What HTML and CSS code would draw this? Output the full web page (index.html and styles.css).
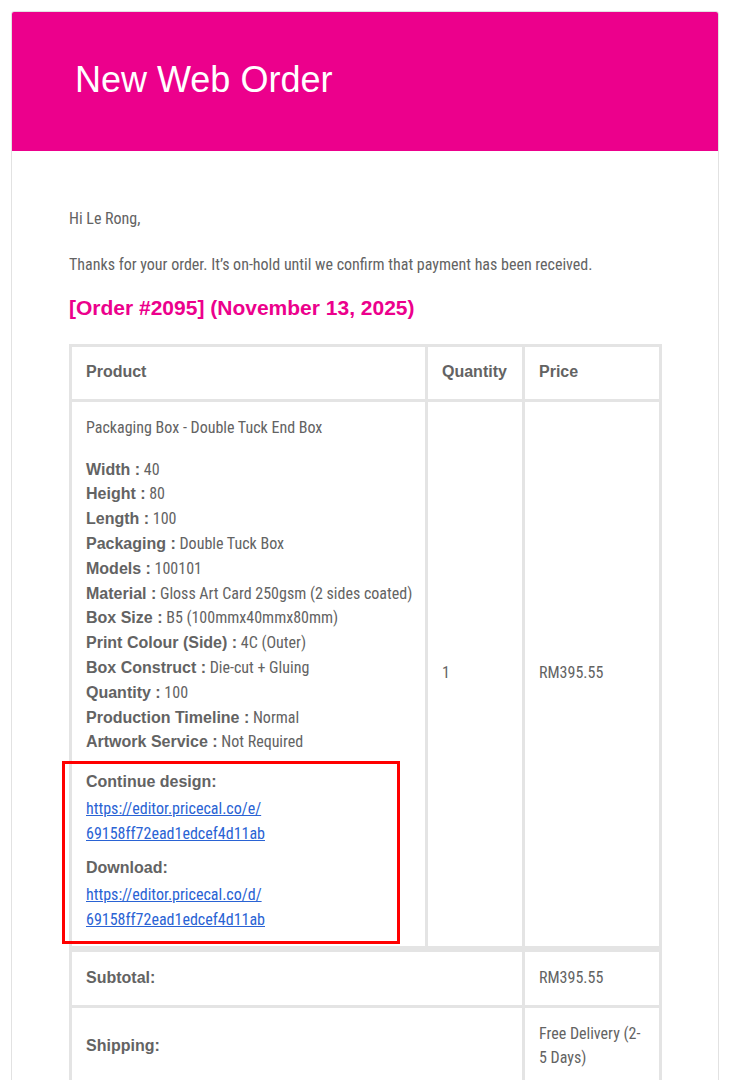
FILE: index.html
```html
<!DOCTYPE html>
<html lang="en">
<head>
<meta charset="utf-8">
<title>New Web Order</title>
<link rel="stylesheet" href="styles.css">
</head>
<body>
<div class="card">
  <div class="header">
    <h1 class="title">New Web Order</h1>
  </div>
  <div class="content">
    <p class="greet">Hi Le Rong,</p>
    <p class="intro">Thanks for your order. It’s on-hold until we confirm that payment has been received.</p>
    <h2 class="order-title">[Order #2095] (November 13, 2025)</h2>
    <table class="order">
      <colgroup>
        <col class="c-product">
        <col class="c-qty">
        <col class="c-price">
      </colgroup>
      <thead>
        <tr>
          <th>Product</th>
          <th>Quantity</th>
          <th>Price</th>
        </tr>
      </thead>
      <tbody>
        <tr>
          <td class="product">
            <div class="pname">Packaging Box - Double Tuck End Box</div>
            <ul class="meta">
              <li><b>Width :</b> 40</li>
              <li><b>Height :</b> 80</li>
              <li><b>Length :</b> 100</li>
              <li><b>Packaging :</b> Double Tuck Box</li>
              <li><b>Models :</b> 100101</li>
              <li><b>Material :</b> Gloss Art Card 250gsm (2 sides coated)</li>
              <li><b>Box Size :</b> B5 (100mmx40mmx80mm)</li>
              <li><b>Print Colour (Side) :</b> 4C (Outer)</li>
              <li><b>Box Construct :</b> Die-cut + Gluing</li>
              <li><b>Quantity :</b> 100</li>
              <li><b>Production Timeline :</b> Normal</li>
              <li><b>Artwork Service :</b> Not Required</li>
            </ul>
            <div class="links">
              <div class="highlight"></div>
              <div class="link-label">Continue design:</div>
              <a class="link" href="#">https://editor.pricecal.co/e/<br>69158ff72ead1edcef4d11ab</a>
              <div class="link-label second">Download:</div>
              <a class="link" href="#">https://editor.pricecal.co/d/<br>69158ff72ead1edcef4d11ab</a>
            </div>
          </td>
          <td class="num">1</td>
          <td class="num">RM395.55</td>
        </tr>
      </tbody>
      <tfoot>
        <tr class="first">
          <th colspan="2">Subtotal:</th>
          <td>RM395.55</td>
        </tr>
        <tr>
          <th colspan="2">Shipping:</th>
          <td>Free Delivery (2-<br>5 Days)</td>
        </tr>
      </tfoot>
    </table>
  </div>
</div>
</body>
</html>
```

FILE: styles.css
```css
html, body {
  margin: 0;
  padding: 0;
  background: #ffffff;
}

body {
  padding: 11px 16px 0 11px;
  font-family: "Roboto Condensed", "Liberation Sans", sans-serif;
  color: #636363;
}

.card {
  width: 706px;
  border: 1px solid #e2e2e2;
  border-radius: 3px;
  background: #fff;
  overflow: hidden;
}

.header {
  background: #ec008c;
  height: 139px;
  display: flex;
  align-items: center;
  padding: 0 0 0 63px;
}

.title {
  margin: 0 0 3px;
  font-family: "Liberation Sans", Arial, sans-serif;
  font-weight: 400;
  font-size: 36px;
  letter-spacing: 0;
  color: #ffffff;
}

.content {
  padding: 56px 58px 0 57px;
}

.greet,
.intro {
  margin: 0;
  font-size: 16px;
  line-height: 24px;
}

.intro {
  margin-top: 22px;
}

.order-title {
  margin: 17px 0 0;
  font-family: "Liberation Sans", Arial, sans-serif;
  font-weight: 700;
  font-size: 21px;
  line-height: 28px;
  color: #ec008c;
}

.order {
  margin-top: 22px;
  width: 590px;
  border-collapse: collapse;
  table-layout: fixed;
}

.c-product { width: 356px; }
.c-qty { width: 97px; }
.c-price { width: 137px; }

.order th,
.order td {
  border: 3px solid #e4e4e4;
  padding: 14px 14px;
  text-align: left;
  line-height: 24.8px;
  font-size: 16px;
  color: #636363;
}

.order th {
  font-family: "Liberation Sans", Arial, sans-serif;
  font-weight: 700;
}

.order thead th {
  padding-top: 13px;
  padding-bottom: 14px;
}

.order td.num {
  vertical-align: middle;
}

.order td.product {
  padding-top: 14px;
  padding-bottom: 14px;
  padding-right: 8px;
}

.pname {
  margin-bottom: 17px;
}

.meta {
  list-style: none;
  margin: 0;
  padding: 0;
  white-space: nowrap;
}

.meta b,
.link-label {
  font-family: "Liberation Sans", Arial, sans-serif;
  font-weight: 700;
}

.links {
  position: relative;
  margin-top: 15px;
}

.link-label.second {
  margin-top: 10px;
}

.link {
  display: block;
  margin-top: 1px;
  line-height: 25px;
  color: #2a63d4;
  text-decoration: underline;
}

.highlight {
  position: absolute;
  left: -24px;
  top: -9px;
  bottom: -12px;
  width: 338px;
  border: 3px solid #ff0000;
  box-sizing: border-box;
  pointer-events: none;
}

.order tfoot tr.first th,
.order tfoot tr.first td {
  border-top-width: 6px;
}

.order tfoot th {
  vertical-align: middle;
}
```
